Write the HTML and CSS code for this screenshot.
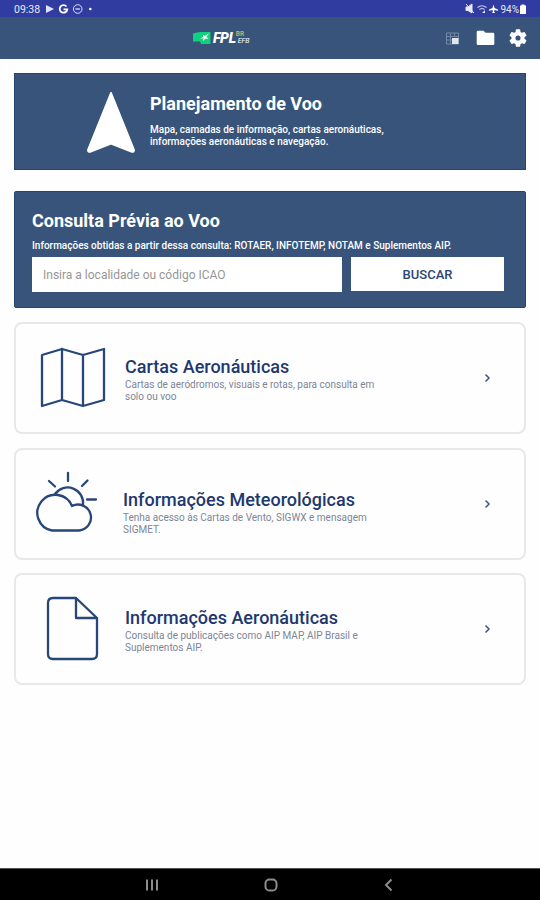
FILE: index.html
```html
<!DOCTYPE html>
<html lang="pt-BR">
<head>
    <meta charset="UTF-8">
    <meta name="viewport" content="width=device-width, initial-scale=1.0">
    <title>FPL BR</title>
    <link rel="stylesheet" href="styles.css">
</head>
<body>
    <div class="status-bar">
        <span class="clock">09:38</span>
        <svg class="status-left" width="50" height="12" viewBox="0 0 50 12">
            <path d="M1 2l8 4-8 4z" fill="#dfe2fa"/>
            <path d="M21.5 3.5A3.8 3.8 0 1 0 22.3 6.300H18.500" fill="none" stroke="#fff" stroke-width="1.8"/>
            <circle cx="32.700" cy="6" r="4.300" fill="none" stroke="#dfe2fa"/>
            <path d="M30.500 6h4.400" stroke="#dfe2fa" stroke-width="1.300"/>
            <circle cx="45.300" cy="6" r="1.300" fill="#fff"/>
        </svg>
        <svg class="status-right" width="33" height="12" viewBox="0 0 33 12">
            <path d="M1 4h2l4-3v9L3 7.500H1zM1 1l8 9" fill="#e6e8fb" stroke="#e6e8fb"/>
            <path d="M12.500 4.500q4.500-3.500 9 0M14.500 6.500q2.500-2 5 0" fill="none" stroke="#c4c9f2" stroke-width="1.200"/>
            <path d="M17 10l3-3v3z" fill="#dfe2fa"/>
            <path d="M28.500 1.500l1 3.500 3.500 1.500v1.200l-3.500-.7-.3 2 1 1h-3.400l1-1-.3-2-3.500.7V6.500L27.500 5z" fill="#fff"/>
        </svg>
        <span class="battery-level">94%</span>
        <svg width="6" height="10" viewBox="0 0 6 10"><path d="M0 1.500h1.500V.5h3v1H6V10H0z" fill="#fff"/></svg>
    </div>
    <header>
        <div class="logo">
            <svg width="20" height="15" viewBox="0 0 20 15">
                <path d="M1 2.500q5-2 10-1.500h7.500v12H9l-1-2.500H1z" fill="#12d17d"/>
                <path d="M8 8l3-2V4l2 1 4-3-2.500 4 2 2-3-.5-2.500 2.500.5-3z" fill="#fff"/>
            </svg>
            <span class="logo-name">FPL</span>
            <span class="logo-side"><span class="logo-br">BR</span><span class="logo-efb">EFB</span></span>
        </div>
        <div class="header-icons">
            <svg width="15" height="15" viewBox="0 0 15 15">
                <path d="M1.500 2h12v11h-12zM1.500 5.500h12M1.500 9h6M5.500 2v11M9.500 2v4" fill="none" stroke="#7188a8"/>
                <path d="M7 7h6.500v6H7z" fill="#dfe7f1"/>
            </svg>
            <svg width="19" height="16" viewBox="0 0 19 16">
                <path d="M2 .8h5.500l2 2H17q1.300 0 1.300 1.300v9.600q0 1.300-1.300 1.300H2Q.7 15 .7 13.700V2.100Q.7.8 2 .8z" fill="#fff"/>
            </svg>
            <svg width="20" height="20" viewBox="1 1 22 22">
                <path d="M19.140 12.940a7 7 0 0 0 0-1.880l2.030-1.580a.5.5 0 0 0 .12-.61l-1.920-3.320a.5.5 0 0 0-.59-.22l-2.390.96a7 7 0 0 0-1.620-.94l-.36-2.540a.5.5 0 0 0-.48-.41h-3.840a.5.5 0 0 0-.47.410l-.36 2.540a7 7 0 0 0-1.620.94l-2.390-.96a.5.5 0 0 0-.59.22L2.740 8.870a.5.500 0 0 0 .12.610l2.030 1.580a7 7 0 0 0 0 1.880l-2.030 1.580a.5.500 0 0 0-.12.610l1.920 3.320c.12.220.37.290.59.220l2.390-.96a7 7 0 0 0 1.620.94l.36 2.540c.05.240.24.410.48.410h3.840c.24 0 .44-.17.470-.410l.36-2.540a7 7 0 0 0 1.620-.94l2.390.960c.22.080.47 0 .59-.220l1.920-3.320a.5.500 0 0 0-.12-.610zM12 14.800a2.800 2.800 0 1 1 0-5.600 2.800 2.800 0 0 1 0 5.600z" fill="#fff"/>
            </svg>
        </div>
    </header>
    <main>
        <section class="planning">
            <svg class="arrow" width="50" height="63" viewBox="0 0 50 63">
                <path d="M25 2L48 59Q48 61 46 60.800L25 52.500 4 60.800Q2 61 2 59z" fill="#fff" stroke="#fff" stroke-width="2" stroke-linejoin="round"/>
            </svg>
            <div>
                <h2>Planejamento de Voo</h2>
                <p>Mapa, camadas de informação, cartas aeronáuticas,<br>informações aeronáuticas e navegação.</p>
            </div>
        </section>
        <section class="search">
            <h2>Consulta Prévia ao Voo</h2>
            <p>Informações obtidas a partir dessa consulta: ROTAER, INFOTEMP, NOTAM e Suplementos AIP.</p>
            <form class="search-form">
                <input type="text" placeholder="Insira a localidade ou código ICAO">
                <button type="button">BUSCAR</button>
            </form>
        </section>
        <a class="card" href="#">
            <svg class="card-icon" width="80" height="72" viewBox="0 0 80 72">
                <path d="M16 13l20-6 21 6 21-6v51l-21 6-21-6-20 6zM36 7v51M57 13v51"/>
            </svg>
            <div class="card-text">
                <h3 class="title-charts">Cartas Aeronáuticas</h3>
                <p class="text-charts">Cartas de aeródromos, visuais e rotas, para consulta em<br>solo ou voo</p>
            </div>
            <svg class="chevron" width="7" height="10" viewBox="0 0 7 10"><path d="M1.500 1.500L5 5 1.500 8.500"/></svg>
        </a>
        <a class="card card-weather" href="#">
            <svg class="card-icon" width="80" height="72" viewBox="0 0 80 72">
                <path d="M26 62.500a18 18 0 1 1 20-24.500 13 13 0 1 1 7 24.500z"/>
                <path d="M29 26a15.500 15.500 0 0 1 28 11M42 5v8M23 13l6 5.500M61.500 12.500L56 18M61 31.500h9"/>
            </svg>
            <div class="card-text">
                <h3 class="title-weather">Informações Meteorológicas</h3>
                <p class="text-weather">Tenha acesso às Cartas de Vento, SIGWX e mensagem<br>SIGMET.</p>
            </div>
            <svg class="chevron" width="7" height="10" viewBox="0 0 7 10"><path d="M1.500 1.500L5 5 1.500 8.500"/></svg>
        </a>
        <a class="card" href="#">
            <svg class="card-icon" width="80" height="72" viewBox="0 0 80 72">
                <path d="M27 5h23l21 20v36q0 5-5 5H27q-5 0-5-5V10q0-5 5-5zM50 5v20h21"/>
            </svg>
            <div class="card-text">
                <h3 class="title-info">Informações Aeronáuticas</h3>
                <p class="text-info">Consulta de publicações como AIP MAP, AIP Brasil e<br>Suplementos AIP.</p>
            </div>
            <svg class="chevron" width="7" height="10" viewBox="0 0 7 10"><path d="M1.500 1.500L5 5 1.500 8.500"/></svg>
        </a>
    </main>
    <nav>
        <svg width="14" height="14" viewBox="0 0 14 14"><path d="M2 1.500v11M7 1.500v11M12 1.500v11"/></svg>
        <svg width="14" height="14" viewBox="0 0 14 14"><rect x="1.500" y="1.500" width="11" height="11" rx="3.800"/></svg>
        <svg width="14" height="14" viewBox="0 0 14 14"><path d="M9.500 1.500L4 7l5.500 5.500"/></svg>
    </nav>
</body>
</html>
```

FILE: styles.css
```css
/* Global Styles */
* {
    box-sizing: border-box;
}
body {
    display: flex;
    flex-direction: column;
    height: 900px;
    margin: 0;
    background-color: #fefefe;
    font-family: Roboto, Arial, sans-serif;
}
h2, h3, p {
    margin: 0;
    white-space: nowrap;
}
svg {
    flex-shrink: 0;
}

/* Status bar */
.status-bar {
    display: flex;
    align-items: center;
    height: 17px;
    padding: 1px 14px 0;
    background-color: #303c9f;
    color: #e6e8fb;
    font-size: 10.5px;
}
.clock {
    width: 31px;
}
.status-right {
    margin-left: auto;
}
.battery-level {
    margin: 0 1px 0 2px;
    font-size: 10px;
}

/* Header */
header {
    display: flex;
    align-items: center;
    justify-content: space-between;
    height: 42px;
    padding: 0 12px 0 192px;
    background-color: #38547b;
}
.logo {
    display: flex;
    align-items: center;
    color: #fff;
}
.logo-name {
    margin-left: 1px;
    font-size: 14px;
    font-style: italic;
    font-weight: 900;
    line-height: 14px;
    letter-spacing: -0.3px;
}
.logo-side {
    display: flex;
    flex-direction: column;
    font-size: 7px;
    line-height: 7px;
}
.logo-br {
    color: #c0ad62;
    font-weight: bold;
    font-size: 6.5px;
}
.logo-efb {
    padding-left: 2px;
    font-style: italic;
}
.header-icons {
    display: flex;
    align-items: center;
}
.header-icons svg:nth-child(2) {
    margin: 0 13px 0 16px;
}

/* Content */
main {
    flex: 1;
    padding: 14px 14px 0;
}
.planning,
.search {
    background-color: #38547b;
    border: 1px solid #264672;
    color: #fff;
}
.planning {
    display: flex;
    height: 97px;
    padding: 17px 0 0 71px;
}
.planning h2 {
    margin: 2px 0 9px 14px;
    font-size: 18px;
    line-height: 22px;
}
.planning p {
    margin-left: 14px;
    font-size: 10px;
    font-weight: 500;
    line-height: 12px;
}
.search {
    height: 117px;
    margin: 21px 0 14px;
    padding: 18px 21px 0 17px;
    border-radius: 2px;
}
.search h2 {
    font-size: 18px;
    line-height: 22px;
}
.search p {
    margin: 7px 0 5px;
    font-size: 10px;
    font-weight: 500;
    line-height: 13px;
}
.search-form {
    display: flex;
    align-items: flex-start;
    gap: 9px;
}
.search-form input {
    width: 310px;
    height: 35px;
    padding: 0 11px;
    background-color: #fff;
    border: 0;
    font-family: inherit;
    font-size: 12px;
}
.search-form input::placeholder {
    color: #969696;
    opacity: 1;
}
.search-form button {
    width: 153px;
    height: 34px;
    padding: 0;
    background-color: #fff;
    border: 0;
    color: #2a4674;
    font-family: inherit;
    font-size: 13px;
    font-weight: 500;
}

/* Cards */
.card {
    display: flex;
    align-items: center;
    height: 112px;
    margin-bottom: 14px;
    padding: 0 33px 0 10px;
    border: 2px solid #e8e8e8;
    border-radius: 8px;
    color: #7c8598;
    text-decoration: none;
}
.card-weather {
    margin-bottom: 13px;
}
.card-icon path {
    fill: none;
    stroke: #274679;
    stroke-width: 2.3;
    stroke-linecap: round;
    stroke-linejoin: round;
}
.card-text {
    margin: 4px 0 0 19px;
}
.card-weather .card-text {
    margin: 18px 0 0 17px;
}
.card h3 {
    color: #21386f;
    font-size: 18px;
    font-weight: 500;
    line-height: 20px;
}
.card p {
    margin-top: 2px;
    font-size: 10px;
    line-height: 12px;
}
.chevron {
    margin-left: auto;
}
.chevron path {
    fill: none;
    stroke: #3d5780;
    stroke-width: 1.5;
}

/* Bottom navigation */
nav {
    display: flex;
    align-items: center;
    gap: 104.500px;
    height: 32px;
    padding-left: 145px;
    background-color: #000;
    border-top: 1px solid #555;
}
nav path,
nav rect {
    fill: none;
    stroke: #8c8c8c;
    stroke-width: 2;
}
```
